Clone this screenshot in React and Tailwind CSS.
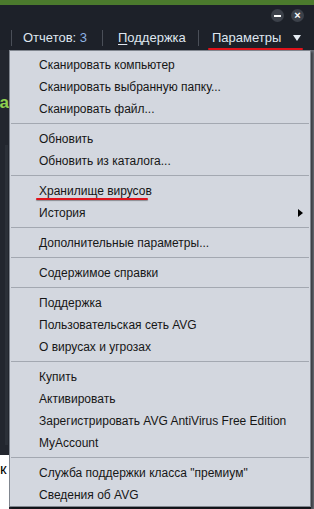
import React from 'react';

const menu = [
  ['Сканировать компьютер'],
  ['Сканировать выбранную папку...'],
  ['Сканировать файл...'],
  null,
  ['Обновить'],
  ['Обновить из каталога...'],
  null,
  ['Хранилище вирусов', 'mark'],
  ['История', 'sub'],
  null,
  ['Дополнительные параметры...'],
  null,
  ['Содержимое справки'],
  null,
  ['Поддержка'],
  ['Пользовательская сеть AVG'],
  ['О вирусах и угрозах'],
  null,
  ['Купить'],
  ['Активировать'],
  ['Зарегистрировать AVG AntiVirus Free Edition'],
  ['MyAccount'],
  null,
  ['Служба поддержки класса "премиум"'],
  ['Сведения об AVG'],
];

const Sep = () => <div className="w-px h-[16px] bg-[#4a4f58]" />;

export default function App() {
  return (
    <div className="w-[314px] h-[509px] overflow-hidden bg-[#1d2129] font-['Liberation_Sans',sans-serif]">
      {/* window top */}
      <div className="h-[5px] bg-[#4b7a2d]" />
      <div className="flex justify-end gap-[7px] pt-[4px] pr-[10px] h-[20px]">
        <div className="w-[13px] h-[13px] rounded-full bg-[#3c414a] flex items-center justify-center">
          <div className="w-[7px] h-[2px] bg-white" />
        </div>
        <div className="w-[13px] h-[13px] rounded-full bg-[#3c414a] flex items-center justify-center text-white text-[11px] font-bold leading-none">
          ×
        </div>
      </div>

      {/* nav */}
      <div className="flex items-center h-[25px] text-[13px] text-[#dfe6ef]">
        <div className="ml-[11px]"><Sep /></div>
        <div className="w-[90px] pl-[11px] whitespace-nowrap">
          Отчетов: <span className="text-[#8fb3e3]">3</span>
        </div>
        <Sep />
        <div className="w-[95px] pl-[15px] whitespace-nowrap">
          <span className="underline underline-offset-2">П</span>оддержка
        </div>
        <Sep />
        <div className="relative flex items-center pl-[13px] whitespace-nowrap">
          <span>Параметры</span>
          <span className="ml-[12px] w-0 h-0 border-l-[4px] border-r-[4px] border-t-[6px] border-l-transparent border-r-transparent border-t-[#e6ebf2]" />
          <div className="absolute left-[9px] top-[20px] w-[95px] h-[2px] rounded-full bg-[#e0121a]" />
        </div>
      </div>

      {/* body under menu */}
      <div className="flex h-[459px]">
        <div className="w-[9px] flex flex-col">
          <div className="h-[405px] bg-[#22262e] overflow-hidden relative">
            <div className="absolute right-0 top-[44px] text-[17px] font-bold text-[#8fd14f] leading-none">за</div>
            <div className="absolute left-[5px] top-[95px] w-[3px] h-[300px] bg-[#2b3038]" />
          </div>
          <div className="flex-1 bg-white text-[15px] text-black leading-none pt-[6px] overflow-hidden">к</div>
        </div>

        <div className="w-[302px] h-[457px] bg-[#d3d7df] border border-[#80868f] pt-[3px] text-[12px] text-[#161616] shadow-[2px_2px_2px_rgba(0,0,0,0.45)] relative z-10">
          {menu.map((m, i) =>
            m === null ? (
              <div key={i} className="h-[8px] pt-[3px] px-px">
                <div className="h-px bg-[#a3a8b1]" />
              </div>
            ) : (
              <div key={i} className="relative h-[22px] flex items-center pl-[29px] pr-[6px] whitespace-nowrap">
                <span>{m[0]}</span>
                {m[1] === 'sub' && (
                  <span className="ml-auto mr-[1px] w-0 h-0 border-t-[4px] border-b-[4px] border-l-[5px] border-t-transparent border-b-transparent border-l-black" />
                )}
                {m[1] === 'mark' && (
                  <div className="absolute left-[26px] top-[18px] w-[112px] h-[2px] rounded-full bg-[#e0121a] shadow-[0_1px_1px_rgba(0,0,0,0.35)]" />
                )}
              </div>
            )
          )}
        </div>

        <div className="flex-1 bg-[#6c717a]" />
      </div>
    </div>
  );
}
